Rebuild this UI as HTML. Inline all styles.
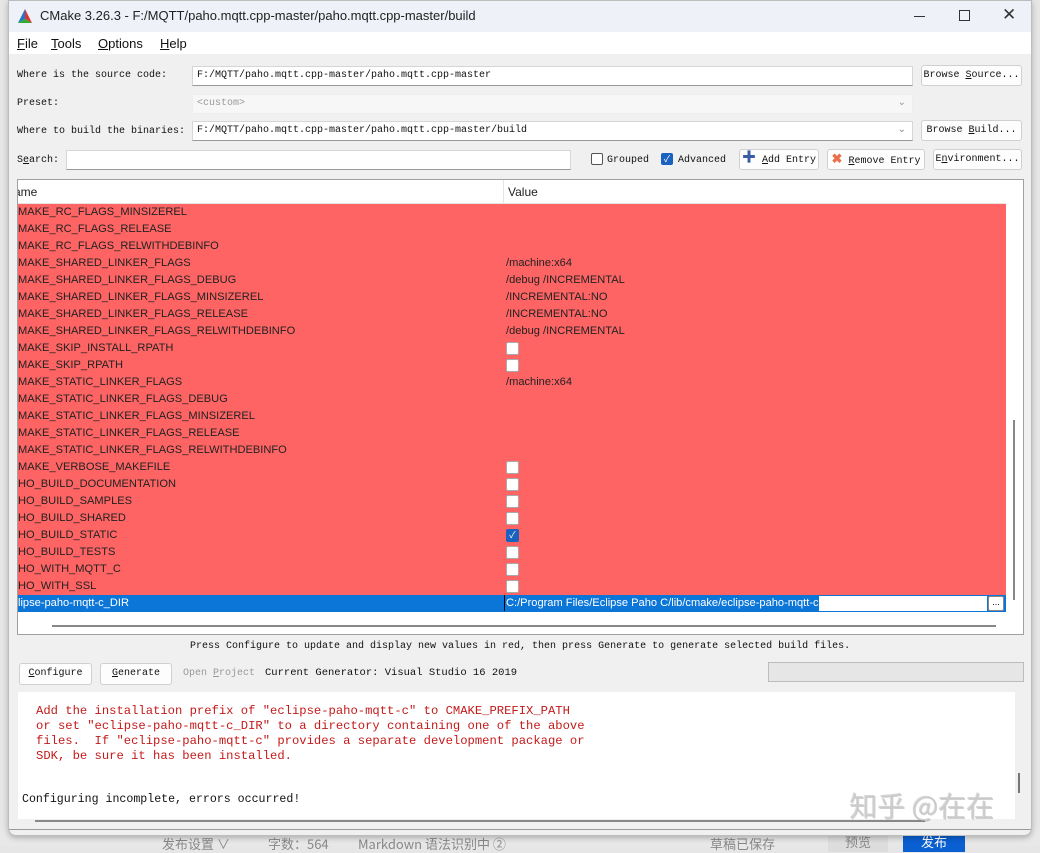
<!DOCTYPE html>
<html><head><meta charset="utf-8">
<style>
*{margin:0;padding:0;box-sizing:border-box}
body{width:1040px;height:846px;overflow:hidden;background:#e6e6e6;font-family:"Liberation Sans","Noto Sans CJK SC",sans-serif;position:relative}
.abs{position:absolute}
.mono{font-family:"Liberation Mono","Noto Sans CJK SC",monospace;font-size:10px;color:#111;white-space:nowrap}
.win{left:8px;top:0;width:1024px;height:836px;background:#f0f0f0;border:1px solid #bdbdbd;border-radius:0 0 8px 8px;box-shadow:0 2px 6px rgba(0,0,0,.25);overflow:hidden}
.field{background:#fff;border:1px solid #d6d6d6;border-bottom:1px solid #999;height:20px}
.btn{background:#fdfdfd;border:1px solid #d0d0d0;border-radius:3px;height:21px;text-align:center;line-height:19px}
.row{position:absolute;left:0;width:988px;height:17px;background:#ff6464;font-size:11.1px;color:#222;line-height:17px}
.row span{position:absolute;left:-8px;white-space:nowrap}
.row .v{left:488px}
.cb{position:absolute;left:488px;top:2px;width:13px;height:13px;background:#fff;border:1px solid #aaa;border-radius:2px}
u{text-decoration:underline}
</style></head><body>
<div class="abs" style="left:0;top:826px;width:1040px;height:20px;background:#e8e8e8;font-size:13px;color:#888;font-family:'Noto Sans CJK SC',sans-serif">
<span class="abs" style="left:162px;top:8px">发布设置 ∨</span>
<span class="abs" style="left:268px;top:8px">字数：564</span>
<span class="abs" style="left:358px;top:8px">Markdown 语法识别中 ②</span>
<span class="abs" style="left:710px;top:8px">草稿已保存</span>
<span class="abs" style="left:828px;top:6px;width:60px;height:20px;background:#ddd;text-align:center">预览</span>
<span class="abs" style="left:903px;top:6px;width:62px;height:20px;background:#0a5fd1;color:#fff;text-align:center">发布</span>
</div>
<div class="abs win">
 <div class="abs" style="left:0;top:0;width:1024px;height:31px;background:#eef2f8"></div>
 <svg class="abs" style="left:8px;top:7px" width="16" height="16" viewBox="0 0 16 16"><polygon points="8,1 1,15 8,11" fill="#1f78c8"/><polygon points="8,1 15,15 8,11" fill="#d33"/><polygon points="1,15 15,15 8,11" fill="#3a3"/></svg>
 <div class="abs" style="left:31px;top:7px;font-size:13px;color:#222">CMake 3.26.3 - F:/MQTT/paho.mqtt.cpp-master/paho.mqtt.cpp-master/build</div>
 <div class="abs" style="left:905px;top:15px;width:11px;height:1px;background:#333"></div>
 <div class="abs" style="left:950px;top:9px;width:11px;height:11px;border:1px solid #333"></div>
 <div class="abs" style="left:993px;top:4px;font-size:17px;color:#333">✕</div>
 <div class="abs" style="left:0;top:31px;width:1024px;height:22px;background:#fff;font-size:13px;color:#111">
  <span class="abs" style="left:8px;top:4px"><u>F</u>ile</span>
  <span class="abs" style="left:42px;top:4px"><u>T</u>ools</span>
  <span class="abs" style="left:89px;top:4px"><u>O</u>ptions</span>
  <span class="abs" style="left:151px;top:4px"><u>H</u>elp</span>
 </div>
 <div class="abs mono" style="left:8px;top:69px">Where is the source code:</div>
 <div class="abs field mono" style="left:183px;top:65px;width:721px;padding:3px 4px">F:/MQTT/paho.mqtt.cpp-master/paho.mqtt.cpp-master</div>
 <div class="abs btn mono" style="left:912px;top:64px;width:101px">Browse <u>S</u>ource...</div>
 <div class="abs mono" style="left:8px;top:97px">Preset:</div>
 <div class="abs field mono" style="left:183px;top:93px;width:721px;padding:3px 4px;color:#999;background:#f7f7f7;border-color:#eee">&lt;custom&gt;<span class="abs" style="right:6px;top:2px">⌄</span></div>
 <div class="abs mono" style="left:8px;top:125px">Where to build the binaries:</div>
 <div class="abs field mono" style="left:183px;top:120px;width:721px;padding:3px 4px">F:/MQTT/paho.mqtt.cpp-master/paho.mqtt.cpp-master/build<span class="abs" style="right:6px;top:2px;color:#888">⌄</span></div>
 <div class="abs btn mono" style="left:912px;top:119px;width:101px">Browse <u>B</u>uild...</div>
 <div class="abs mono" style="left:8px;top:154px">S<u>e</u>arch:</div>
 <div class="abs field" style="left:57px;top:149px;width:505px"></div>
 <div class="abs" style="left:582px;top:152px;width:12px;height:12px;border:1px solid #555;border-radius:2px;background:#fff"></div>
 <div class="abs mono" style="left:598px;top:154px">Grouped</div>
 <div class="abs" style="left:652px;top:152px;width:12px;height:12px;border-radius:2px;background:#1a62c0;color:#fff;font-size:9px;text-align:center;line-height:12px">✓</div>
 <div class="abs mono" style="left:669px;top:154px">Advanced</div>
 <div class="abs btn mono" style="left:730px;top:148px;width:80px"><span style="color:#3b5ca8;font-weight:bold;font-size:14px">✚</span> <u>A</u>dd Entry</div>
 <div class="abs btn mono" style="left:818px;top:148px;width:98px"><span style="color:#e8704a;font-weight:bold;font-size:13px">✖</span> <u>R</u>emove Entry</div>
 <div class="abs btn mono" style="left:924px;top:148px;width:89px">E<u>n</u>vironment...</div>
 <div class="abs" style="left:8px;top:178px;width:1007px;height:456px;background:#fff;border:1px solid #a0a0a0;overflow:hidden">
  <div class="abs" style="left:0;top:0;width:988px;height:24px;border-bottom:1px solid #e5e5e5;font-size:12px;color:#222">
   <span class="abs" style="left:-4px;top:5px">ame</span>
   <div class="abs" style="left:485px;top:0;width:1px;height:24px;background:#e5e5e5"></div>
   <span class="abs" style="left:490px;top:5px">Value</span>
  </div>
  <div class="abs" style="left:0;top:24px;width:988px;height:410px">
   <div class="row" style="top:0"><span>CMAKE_RC_FLAGS_MINSIZEREL</span></div>
   <div class="row" style="top:17px"><span>CMAKE_RC_FLAGS_RELEASE</span></div>
   <div class="row" style="top:34px"><span>CMAKE_RC_FLAGS_RELWITHDEBINFO</span></div>
   <div class="row" style="top:51px"><span>CMAKE_SHARED_LINKER_FLAGS</span><span class="v">/machine:x64</span></div>
   <div class="row" style="top:68px"><span>CMAKE_SHARED_LINKER_FLAGS_DEBUG</span><span class="v">/debug /INCREMENTAL</span></div>
   <div class="row" style="top:85px"><span>CMAKE_SHARED_LINKER_FLAGS_MINSIZEREL</span><span class="v">/INCREMENTAL:NO</span></div>
   <div class="row" style="top:102px"><span>CMAKE_SHARED_LINKER_FLAGS_RELEASE</span><span class="v">/INCREMENTAL:NO</span></div>
   <div class="row" style="top:119px"><span>CMAKE_SHARED_LINKER_FLAGS_RELWITHDEBINFO</span><span class="v">/debug /INCREMENTAL</span></div>
   <div class="row" style="top:136px"><span>CMAKE_SKIP_INSTALL_RPATH</span><i class="cb"></i></div>
   <div class="row" style="top:153px"><span>CMAKE_SKIP_RPATH</span><i class="cb"></i></div>
   <div class="row" style="top:170px"><span>CMAKE_STATIC_LINKER_FLAGS</span><span class="v">/machine:x64</span></div>
   <div class="row" style="top:187px"><span>CMAKE_STATIC_LINKER_FLAGS_DEBUG</span></div>
   <div class="row" style="top:204px"><span>CMAKE_STATIC_LINKER_FLAGS_MINSIZEREL</span></div>
   <div class="row" style="top:221px"><span>CMAKE_STATIC_LINKER_FLAGS_RELEASE</span></div>
   <div class="row" style="top:238px"><span>CMAKE_STATIC_LINKER_FLAGS_RELWITHDEBINFO</span></div>
   <div class="row" style="top:255px"><span>CMAKE_VERBOSE_MAKEFILE</span><i class="cb"></i></div>
   <div class="row" style="top:272px"><span style="left:-14px">PAHO_BUILD_DOCUMENTATION</span><i class="cb"></i></div>
   <div class="row" style="top:289px"><span style="left:-14px">PAHO_BUILD_SAMPLES</span><i class="cb"></i></div>
   <div class="row" style="top:306px"><span style="left:-14px">PAHO_BUILD_SHARED</span><i class="cb"></i></div>
   <div class="row" style="top:323px"><span style="left:-14px">PAHO_BUILD_STATIC</span><i class="cb" style="background:#1a62c0;border-color:#1a62c0;color:#fff;font-size:9px;font-style:normal;text-align:center;line-height:11px">✓</i></div>
   <div class="row" style="top:340px"><span style="left:-14px">PAHO_BUILD_TESTS</span><i class="cb"></i></div>
   <div class="row" style="top:357px"><span style="left:-14px">PAHO_WITH_MQTT_C</span><i class="cb"></i></div>
   <div class="row" style="top:374px"><span style="left:-14px">PAHO_WITH_SSL</span><i class="cb"></i></div>
   <div class="row" style="top:391px;background:#0b76d8;color:#fff"><span style="left:0">lipse-paho-mqtt-c_DIR</span>
    <div class="abs" style="left:486px;top:1px;width:483px;height:15px;background:#fff"></div>
    <span class="abs" style="left:486px;top:0;background:#0b76d8;color:#fff;line-height:17px;height:16px;border-left:1px solid #000;padding-left:1px">C:/Program Files/Eclipse Paho C/lib/cmake/eclipse-paho-mqtt-c</span>
    <div class="abs" style="left:970px;top:1px;width:16px;height:15px;background:#fff;border:1px solid #888;border-radius:2px;color:#000;font-size:9px;line-height:10px;text-align:center">...</div>
   </div>
  </div>
  <div class="abs" style="left:995px;top:240px;width:2px;height:180px;background:#888"></div>
  <div class="abs" style="left:34px;top:445px;width:944px;height:2px;background:#888"></div>
 </div>
 <div class="abs mono" style="left:181px;top:640px">Press Configure to update and display new values in red, then press Generate to generate selected build files.</div>
 <div class="abs btn mono" style="left:10px;top:662px;width:73px;height:22px;line-height:20px"><u>C</u>onfigure</div>
 <div class="abs btn mono" style="left:91px;top:662px;width:72px;height:22px;line-height:20px"><u>G</u>enerate</div>
 <div class="abs mono" style="left:174px;top:667px;color:#999">Open <u>P</u>roject</div>
 <div class="abs mono" style="left:256px;top:666px;font-size:10.5px">Current Generator: Visual Studio 16 2019</div>
 <div class="abs" style="left:759px;top:661px;width:256px;height:20px;background:#e6e6e6;border:1px solid #bcbcbc"></div>
 <div class="abs" style="left:9px;top:691px;width:997px;height:127px;background:#fff"></div>
 <div class="abs mono" style="left:27px;top:703px;color:#c41a1a;line-height:15px;white-space:pre;font-size:12.2px">Add the installation prefix of "eclipse-paho-mqtt-c" to CMAKE_PREFIX_PATH
or set "eclipse-paho-mqtt-c_DIR" to a directory containing one of the above
files.  If "eclipse-paho-mqtt-c" provides a separate development package or
SDK, be sure it has been installed.</div>
 <div class="abs mono" style="left:13px;top:792px;font-size:11.6px">Configuring incomplete, errors occurred!</div>
 <div class="abs" style="left:1009px;top:772px;width:2px;height:20px;background:#777"></div>
 <div class="abs" style="left:26px;top:819px;width:890px;height:2px;background:#888"></div>
 <div class="abs" style="left:0;top:828px;width:1024px;height:1px;background:#999"></div>
 <div class="abs" style="left:840px;top:784px;font-size:28px;color:rgba(200,200,200,.75);font-family:'Noto Sans CJK SC',sans-serif;text-shadow:1px 1px 0 rgba(100,100,100,.3)">知乎 @在在</div>
</div>
</body></html>
